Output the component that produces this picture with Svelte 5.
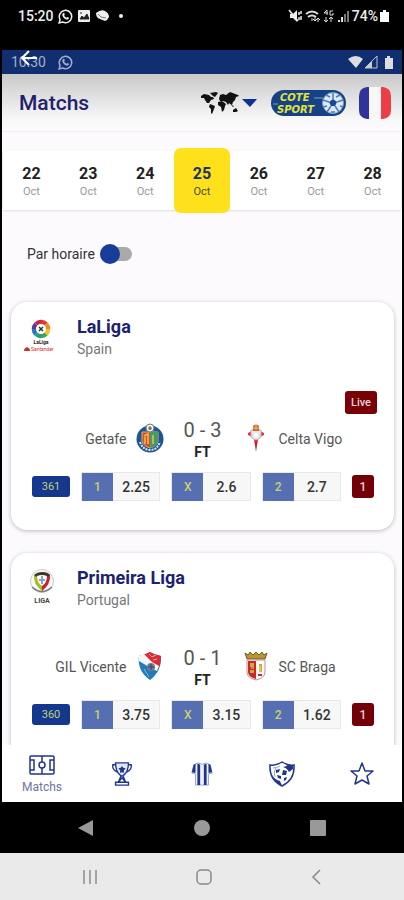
<script lang="ts">
	// Matches screen: date strip, league cards with odds, bottom navigation
	const days = [22, 23, 24, 25, 26, 27, 28];
	let selected = $state(25);
	let byTime = $state(false);

	const leagues = [
		{
			id: 'laliga',
			name: 'LaLiga',
			country: 'Spain',
			live: true,
			home: 'Getafe',
			away: 'Celta Vigo',
			score: '0 - 3',
			code: '361',
			odds: [['1', '2.25'], ['X', '2.6'], ['2', '2.7']]
		},
		{
			id: 'primeira',
			name: 'Primeira Liga',
			country: 'Portugal',
			live: false,
			home: 'GIL Vicente',
			away: 'SC Braga',
			score: '0 - 1',
			code: '360',
			odds: [['1', '3.75'], ['X', '3.15'], ['2', '1.62']]
		}
	];
</script>

{#snippet whatsapp()}
	<svg width="15" height="15" viewBox="0 0 16 16" aria-hidden="true">
		<path d="M1.2 14.8l1-3.6A6.6 6.6 0 1 1 4.8 13.8z" fill="none" stroke="currentColor" stroke-width="1.6" />
		<path d="M5.2 4.4l1.3-.3.8 2-.8.9c.5 1 1.3 1.8 2.4 2.3l.9-.9 1.9.9c0 1.3-.9 2-2 1.9C7 11 4.5 8 4.5 6z" fill="currentColor" />
	</svg>
{/snippet}

{#snippet leagueLogo(id: string)}
	{#if id === 'laliga'}
		<svg width="36" height="37" viewBox="0 0 36 37" aria-hidden="true">
			<g fill="none" stroke-width="4.5">
				<path d="M18 6A7 7 0 0 1 23 8" stroke="#e5352c" />
				<path d="M23 8A7 7 0 0 1 25 13" stroke="#f08a24" />
				<path d="M25 13A7 7 0 0 1 23 18" stroke="#f3c221" />
				<path d="M23 18A7 7 0 0 1 18 20" stroke="#45a348" />
				<path d="M18 20A7 7 0 0 1 13 18" stroke="#259c8b" />
				<path d="M13 18A7 7 0 0 1 11 13" stroke="#2677b9" />
				<path d="M11 13A7 7 0 0 1 13 8" stroke="#603b90" />
				<path d="M13 8A7 7 0 0 1 18 6" stroke="#c5264c" />
			</g>
			<circle cx="18" cy="13" r="5" fill="#fff" />
			<path d="M16 11l4 4M20 11l-4 4" stroke="#333" stroke-width="1.5" />
			<text x="18" y="28" text-anchor="middle" font-size="5" font-weight="700" fill="#222">LaLiga</text>
			<path d="M1 35q0-3 3-4q3 1 3 4z" fill="#d52b33" />
			<text x="8" y="35" font-size="5" fill="#d52b33">Santander</text>
		</svg>
	{:else}
		<svg width="36" height="38" viewBox="0 0 36 38" aria-hidden="true">
			<circle cx="19" cy="14" r="11.5" fill="#fafafa" stroke="#c9c9c9" />
			<path d="M9 20Q19 29 29 20" fill="none" stroke="#777" stroke-width="1.5" />
			<path d="M19 5Q13 5 11 8Q10 17 19 24z" fill="#a6bd24" />
			<path d="M19 5Q25 5 27 8Q28 17 19 24z" fill="#c4242b" />
			<path d="M11 8Q19 2 27 8L24 10H14z" fill="#34382e" />
			<path d="M14 9Q19 7 24 9Q24 16 19 19Q14 16 14 9z" fill="#fff" />
			<path d="M19 9v8M16 13h6" stroke="#86a6bd" stroke-width="2" />
			<text x="19" y="36" text-anchor="middle" font-size="7" font-weight="700" fill="#444">LIGA</text>
		</svg>
	{/if}
{/snippet}

{#snippet crest(team: string)}
	<svg width="30" height="30" viewBox="0 0 30 30" aria-hidden="true">
		{#if team === 'Getafe'}
			<circle cx="15" cy="16" r="13.5" fill="#1d5597" />
			<path d="M5 19Q8 27 15 27Q22 27 25 19" fill="none" stroke="#dce8f2" stroke-width="2" stroke-dasharray="2 1" />
			<path d="M7 9h16v9q-1 5-8 7q-7-2-8-7z" fill="#dd4b2d" stroke="#d6b35a" />
			<path d="M15 9h8v9q-1 5-8 7z" fill="#429b68" />
			<path d="M9 13l4-2v10M10 14v7M18 12v9" fill="none" stroke="#e8c34c" stroke-width="1.5" />
			<circle cx="15" cy="5" r="4" fill="#f4f4f4" stroke="#777" />
			<path d="M15 3l2 2-1 2h-2l-1-2z" fill="#777" />
		{:else if team === 'Celta Vigo'}
			<path d="M13 16h4l-2 13z" fill="#cf1f2e" />
			<path d="M7 10l4-2v6l-4-2zM23 10l-4-2v6l4-2z" fill="#d63a3f" />
			<path d="M10 7h10v5q0 4-5 5q-5-1-5-5z" fill="#dceaf0" stroke="#d9a8a4" />
			<path d="M12 3q3-3 6 0v5h-6z" fill="#dc5a37" />
			<path d="M12 5h6M15 1v6" stroke="#e9c45a" />
			<path d="M13 10h4v4h-4z" fill="#fff" />
		{:else if team === 'GIL Vicente'}
			<path d="M4 5l7-2 4-2 4 2 7 2q1 15-11 24Q2 20 4 5z" fill="#2379bd" />
			<path d="M8 4l7-3 4 2 7 2q0 7-3 13z" fill="#dc2b32" />
			<path d="M4 5l5-2 8 8 7 4-2 5-8-4-10-6z" fill="#f4f6f8" />
			<circle cx="16" cy="16" r="4" fill="#6f7b91" />
			<path d="M13 16h6M16 13v6" stroke="#37445e" />
			<path d="M9 18l5 8" stroke="#83bbe0" />
			<path d="M14 3l3 3 4-2M18 9l4-1" fill="none" stroke="#f3b4ae" />
		{:else}
			<path d="M4 2l3 2 2-3 3 3 3-3 3 3 3-3 2 3 3-2-2 6H6z" fill="#b6943c" stroke="#755c20" stroke-width="1" />
			<path d="M6 9h18v12q0 6-9 8q-9-2-9-8z" fill="#f8f8f8" stroke="#b59a92" />
			<path d="M7 10h8v18q-8-2-8-7z" fill="#c8272c" />
			<path d="M9 12h4v4H9zM9 19h4v3H9zM18 13h3v8h-3z" fill="#cfaa37" />
			<path d="M10 17h3M19 15v7" stroke="#f4df82" />
			<path d="M17 24h4" stroke="#c8272c" stroke-width="2" />
		{/if}
	</svg>
{/snippet}

<div class="phone">
	<div class="system-bar">
		<div class="group">
			<span class="clock">15:20</span>
			{@render whatsapp()}
			<svg width="14" height="14" viewBox="0 0 14 14" aria-hidden="true">
				<rect x="1" y="1" width="12" height="12" rx="1" fill="#eee" />
				<path d="M3 4h2M3 10l2-3 2 2 3-4 2 5z" fill="#222" stroke="#222" />
			</svg>
			<svg width="15" height="14" viewBox="0 0 15 14" aria-hidden="true">
				<path d="M1 4q5-4 9-2 4 2 4 6l-2 3-2 1-5-2Q1 9 1 4z" fill="#eee" />
				<path d="M3 5q2 4 8 4" fill="none" stroke="#777" />
			</svg>
			<span class="dot"></span>
		</div>
		<div class="group tight">
			<svg width="15" height="14" viewBox="0 0 15 14" aria-hidden="true">
				<path d="M2 5h3l4-4v12L5 9H2z" fill="#eee" />
				<path d="M1 1l9 11M11 3v3M11 8v3M13 2v3M13 7v4" stroke="#eee" stroke-width="1.5" />
			</svg>
			<svg width="16" height="14" viewBox="0 0 16 14" aria-hidden="true">
				<path d="M1 5q6-5 12 0M3 8q4-3 8 0" fill="none" stroke="#ddd" stroke-width="2" />
				<path d="M7 9v3M10 8v4M8 10l2 2 2-2M13 13V9M11 11l2-2 2 2" fill="none" stroke="#ddd" />
			</svg>
			<svg width="12" height="14" viewBox="0 0 12 14" aria-hidden="true">
				<path d="M4 1v5M4 1L1 4h4M10 2H7v4h3V4M3 8v5M1 11l2 2 2-2M8 13V8M6 10l2-2 2 2" fill="none" stroke="#ddd" />
			</svg>
			<svg width="13" height="14" viewBox="0 0 13 14" aria-hidden="true">
				<path d="M1 11h2v2H1zM4 8h2v5H4z" fill="#ddd" />
				<path d="M7 5h2v8H7zM10 2h2v11h-2z" fill="#777" />
			</svg>
			<span class="battery-level">74%</span>
			<svg width="9" height="14" viewBox="0 0 9 14" aria-hidden="true">
				<path d="M3 1h3v2h3v10H0V3h3z" fill="#fff" />
			</svg>
		</div>
	</div>

	<div class="app">
		<div class="app-status">
			<div class="group wide">
				<span>10:30</span>
				{@render whatsapp()}
			</div>
			<button class="back" aria-label="Retour">
				<svg width="18" height="16" viewBox="0 0 18 16" aria-hidden="true">
					<path d="M17 8H2M9 1L2 8l7 7" fill="none" stroke="#fff" stroke-width="2" />
				</svg>
			</button>
			<svg width="46" height="15" viewBox="0 0 46 15" aria-hidden="true">
				<path d="M0 4Q8-2 15 4L8 13z" fill="#ddd" />
				<path d="M17 13L29 1v12z" fill="none" stroke="#bcc3d3" stroke-width="1" />
				<path d="M17 13l7-7v7z" fill="#ccc" />
				<path d="M39 1h3v2h3v11h-8V3h2z" fill="#ddd" />
			</svg>
		</div>

		<header>
			<h1>Matchs</h1>
			<button class="region" aria-label="Pays">
				<svg width="40" height="24" viewBox="0 0 40 24" aria-hidden="true">
					<path d="M1 5l3-2 5 1 2 2 2 0 1 2-3 1-2 3-2 0-2-3-1-2-3 0z" fill="#111" />
					<path d="M10 2l6-1 2 1-3 4-2-1z" fill="#111" />
					<path d="M10 13l5 2-1 3-2 5-1-1 0-4-2-2z" fill="#111" />
					<path d="M19 8l1-4 3-1 3 1 4-3 8 3 1 1-3 1-1 3-2 2-1 3-2-1-1-1-1 2-2-3-3-1-3 0z" fill="#111" />
					<path d="M18 11l4-1 4 3-1 2-1 4-2 2-1-5-3-2z" fill="#111" />
					<path d="M33 19l3-2 2 3-2 1h-3zM31 14l3 1-1 1z" fill="#111" />
				</svg>
				<svg width="15" height="8" viewBox="0 0 15 8" aria-hidden="true">
					<path d="M0 0h15L8 8z" fill="#102f93" />
				</svg>
			</button>
			<svg class="brand" width="75" height="26" viewBox="0 0 75 26" role="img" aria-label="Cote Sport">
				<rect width="75" height="26" rx="13" fill="#164184" />
				<path d="M2 14h5M43 8h9" stroke="#74aac3" />
				<g class="brand-name" fill="#e3e33d">
					<text x="9" y="11">COTE</text>
					<text x="6" y="23">SPORT</text>
				</g>
				<circle cx="62" cy="13" r="10.5" fill="#dce8f4" stroke="#789fca" />
				<path d="M62 9l4 3-2 4h-4l-2-4z" fill="#1b459b" />
				<path d="M62 9V3M66 12l6-2M64 16l4 6M60 16l-4 6M58 12l-6-2M55 5l4 2M65 7l4-2M69 16l3 1M52 17l4-1M60 22h4" stroke="#4f79ba" stroke-width="1.5" />
			</svg>
			<button class="flag" aria-label="Français">
				<svg width="34" height="34" viewBox="0 0 34 34" aria-hidden="true">
					<path d="M11 1v32H9Q1 32 1 24V10Q1 2 9 1z" fill="#30339a" />
					<path d="M11 1h12v32H11z" fill="#f7f7f8" />
					<path d="M23 1h2q8 1 8 9v14q0 8-8 9h-2z" fill="#ed3d46" />
				</svg>
			</button>
		</header>

		<main>
			<div class="days">
				{#each days as day}
					<button class="day" class:active={day === selected} onclick={() => (selected = day)}>
						<strong>{day}</strong>
						<span>Oct</span>
					</button>
				{/each}
			</div>

			<label class="toggle">
				Par horaire
				<input type="checkbox" bind:checked={byTime} />
			</label>

			{#each leagues as league}
				<section class="card">
					<div class="league">
						<div class="logo">{@render leagueLogo(league.id)}</div>
						<div>
							<h2>{league.name}</h2>
							<p>{league.country}</p>
						</div>
					</div>
					{#if league.live}
						<div class="live-row"><span class="live">Live</span></div>
					{/if}
					<div class="match">
						<span class="team home">{league.home}</span>
						{@render crest(league.home)}
						<div class="result">
							<span class="score">{league.score}</span>
							<strong>FT</strong>
						</div>
						{@render crest(league.away)}
						<span class="team">{league.away}</span>
					</div>
					<div class="odds">
						<span class="code">{league.code}</span>
						{#each league.odds as [label, value]}
							<button class="odd">
								<span class="pick">{label}</span>
								<span class="value">{value}</span>
							</button>
						{/each}
						<button class="more">1</button>
					</div>
				</section>
			{/each}
		</main>

		<nav class="tabs">
			<a class="current" href="#matchs">
				<svg width="26" height="22" viewBox="0 0 26 22" aria-hidden="true">
					<g fill="none" stroke="currentColor" stroke-width="1.5">
						<rect x="1" y="2" width="24" height="18" rx="1" />
						<path d="M13 2v6M13 14v6M1 6h4v10H1M25 6h-4v10h4" />
						<circle cx="13" cy="11" r="3" />
					</g>
				</svg>
				<span>Matchs</span>
			</a>
			<a href="#competitions" aria-label="Compétitions">
				<svg width="24" height="26" viewBox="0 0 26 28" aria-hidden="true">
					<g fill="none" stroke="currentColor" stroke-width="1.5">
						<path d="M6 2h14q0 10-6 14h-2Q6 12 6 2z" fill="#e2e9f7" />
						<path d="M6 4H3Q2 9 8 12M20 4h3q1 5-5 8" />
						<path d="M12 16l-3 7M14 16l3 7M10 22l3-4 3 4M6 23h14v3H6z" />
					</g>
					<path d="M13 5l1 2 3 1-2 2v3l-2-1-2 1v-3L9 8l3-1z" fill="currentColor" />
				</svg>
			</a>
			<a href="#equipes" aria-label="Équipes">
				<svg width="24" height="26" viewBox="0 0 26 28" aria-hidden="true">
					<path d="M9 2L4 4 2 13l4 1V26h14V14l4-1-2-9-5-2q-4 3-8 0z" fill="#f0f3fb" stroke="#8ca0cc" stroke-width="1" />
					<path d="M4 4l2-1v10l-4-1zM22 4l-2-1v10l4-1zM9 3l2 1v22H8V3zM15 4l2-1 1 1v22h-3z" fill="currentColor" />
				</svg>
			</a>
			<a href="#clubs" aria-label="Clubs">
				<svg width="28" height="28" viewBox="0 0 28 28" aria-hidden="true">
					<path d="M2 5q6 1 12-3 6 4 12 3 1 15-12 21Q1 20 2 5z" fill="#fff" stroke="currentColor" stroke-width="1.5" />
					<path d="M5 8q4 0 7-2M7 17q-2-5 1-9" fill="none" stroke="#8fa3d3" />
					<path d="M15 10l4 1-1 4-4 0zM8 10l4-1-1 3-3 1zM9 15l4 1 0 3-3-1zM16 18l3-1-1 3-2 1z" fill="currentColor" />
					<path d="M15 7q4 1 6 5l4-3V5q-4 1-7-1l1 2zM4 15q3 5 8 6l2 5Q7 23 4 15z" fill="currentColor" />
				</svg>
			</a>
			<a href="#favoris" aria-label="Favoris">
				<svg width="26" height="26" viewBox="0 0 26 26" aria-hidden="true">
					<path d="M13 2l3 8h8l-6 5 2 8-7-4-7 4 2-8-6-5h8z" fill="#fff" stroke="currentColor" stroke-width="1.5" stroke-linejoin="round" />
				</svg>
			</a>
		</nav>
	</div>

	<div class="keys dark">
		<button aria-label="Retour"><svg width="16" height="18" viewBox="0 0 16 18"><path d="M15 1v16L0 9z" fill="#999" /></svg></button>
		<button aria-label="Accueil"><svg width="16" height="16" viewBox="0 0 16 16"><circle cx="8" cy="8" r="8" fill="#999" /></svg></button>
		<button aria-label="Récents"><svg width="16" height="16" viewBox="0 0 16 16"><rect width="16" height="16" rx="1" fill="#999" /></svg></button>
	</div>
	<div class="keys light">
		<button aria-label="Récents"><svg width="16" height="16" viewBox="0 0 16 16"><path d="M2 1v14M8 1v14M14 1v14" stroke="#8c8c8c" stroke-width="1.5" /></svg></button>
		<button aria-label="Accueil"><svg width="18" height="18" viewBox="0 0 18 18"><rect x="2" y="2" width="14" height="14" rx="4" fill="none" stroke="#888" stroke-width="1.5" /></svg></button>
		<button aria-label="Retour"><svg width="16" height="16" viewBox="0 0 16 16"><path d="M11 1L4 8l7 7" fill="none" stroke="#888" stroke-width="1.5" /></svg></button>
	</div>
</div>

<style>
	:global(body) {
		margin: 0;
	}

	.phone {
		display: flex;
		flex-direction: column;
		height: 100vh;
		background: #000;
		font-family: Roboto, sans-serif;
		color: #333;
	}

	.phone * {
		box-sizing: border-box;
	}

	button {
		padding: 0;
		border: 0;
		background: none;
		font-family: inherit;
		color: inherit;
	}

	svg {
		display: block;
		flex-shrink: 0;
	}

	h1,
	h2,
	p {
		margin: 0;
	}

	/* Status bars */
	.system-bar {
		display: flex;
		justify-content: space-between;
		height: 50px;
		padding: 6px 15px 24px 18px;
		color: #eee;
		font-size: 14px;
		font-weight: 500;
	}

	.group {
		display: flex;
		align-items: center;
		gap: 4px;
	}

	.group.tight {
		gap: 2px;
	}

	.group.wide {
		gap: 12px;
	}

	.dot {
		width: 4px;
		height: 4px;
		margin-left: 5px;
		border-radius: 50%;
		background: #eee;
	}

	.app {
		display: flex;
		flex: 1;
		flex-direction: column;
		min-height: 0;
		margin: 0 2px;
		background: #fcfafd;
	}

	.app-status {
		position: relative;
		display: flex;
		align-items: center;
		justify-content: space-between;
		height: 24px;
		padding: 0 8px 0 9px;
		background: #112f70;
		color: #a3afca;
		font-size: 14px;
		flex-shrink: 0;
	}

	/* The arrow floats over the clock */
	.back {
		position: absolute;
		top: 0;
		left: 18px;
	}

	header {
		display: flex;
		align-items: center;
		height: 58px;
		padding: 0 10px 0 17px;
		background: linear-gradient(#c9c9c9, #f8f8f8 80%, #fcfafd);
		border-bottom: 1px solid #eee;
		flex-shrink: 0;
	}

	h1 {
		flex: 1;
		color: #22216d;
		font-size: 21px;
		font-weight: 500;
	}

	.region {
		display: flex;
		align-items: center;
		gap: 2px;
	}

	.brand {
		margin: 0 12px 0 14px;
	}

	.brand-name {
		font: italic 700 10px 'DejaVu Sans', sans-serif;
	}

	/* Scrolling content */
	main {
		flex: 1;
		min-height: 0;
		overflow-y: auto;
		scrollbar-width: none;
	}

	.days {
		display: flex;
		align-items: center;
		height: 59px;
		margin: 19px 1px 0;
		background: #fff;
		box-shadow: 0 1px 2px #ddd;
	}

	.day {
		display: flex;
		flex: 1;
		flex-direction: column;
		align-items: center;
		justify-content: center;
		height: 65px;
		padding-top: 2px;
		border-radius: 7px;
		color: #222;
	}

	.day strong {
		font-size: 16px;
		font-weight: 700;
		line-height: 20px;
	}

	.day span {
		color: #999;
		font-size: 11px;
		line-height: 16px;
	}

	.day.active {
		background: #fee11b;
		color: #203363;
	}

	.day.active span {
		color: #4a4b43;
	}

	.toggle {
		display: flex;
		align-items: center;
		gap: 5px;
		width: fit-content;
		height: 20px;
		margin: 34px 0 38px 25px;
		font-size: 14px;
	}

	.toggle input {
		display: flex;
		align-items: center;
		width: 32px;
		height: 14px;
		margin: 0;
		appearance: none;
		background: #aaa;
		border-radius: 7px;
	}

	.toggle input::before {
		content: '';
		width: 20px;
		height: 20px;
		border-radius: 50%;
		background: #173d98;
		flex-shrink: 0;
	}

	.toggle input:checked {
		justify-content: flex-end;
	}

	.card {
		margin: 0 8px 23px 9px;
		padding-bottom: 29px;
		border-radius: 16px;
		background: #fff;
		box-shadow: 0 1px 4px #bbb;
	}

	.league {
		display: flex;
		height: 89px;
		padding: 14px 12px 0;
		gap: 18px;
	}

	.logo {
		width: 36px;
	}

	h2 {
		color: #1b2270;
		font-size: 18px;
		font-weight: 700;
		line-height: 22px;
	}

	p {
		color: #777;
		font-size: 14px;
		line-height: 22px;
	}

	.live-row {
		display: flex;
		justify-content: flex-end;
		padding-right: 17px;
	}

	.live {
		width: 32px;
		border-radius: 3px;
		background: #780006;
		color: #ead5d5;
		font-size: 11px;
		font-weight: 500;
		line-height: 23px;
		text-align: center;
	}

	.match {
		display: grid;
		grid-template-columns: 1fr 30px 60px 30px 1fr;
		column-gap: 8px;
		align-items: start;
		padding-top: 5px;
	}

	.match > svg {
		margin-top: 4px;
	}

	.team {
		color: #555;
		font-size: 14px;
		line-height: 40px;
	}

	.home {
		text-align: right;
	}

	.result {
		display: flex;
		flex-direction: column;
		align-items: center;
	}

	.score {
		color: #555;
		font-size: 20px;
		line-height: 22px;
	}

	.result strong {
		color: #222;
		font-size: 14px;
		line-height: 22px;
	}

	.odds {
		display: grid;
		grid-template-columns: 38px 1fr 1fr 1fr 22px;
		gap: 11px;
		align-items: center;
		margin-top: 9px;
		padding: 0 20px 0 21px;
	}

	.code {
		border-radius: 3px;
		background: #14388e;
		color: #c3cf76;
		font-size: 11px;
		line-height: 21px;
		text-align: center;
	}

	.odd {
		display: grid;
		grid-template-columns: 2fr 3fr;
		height: 29px;
		border: 1px solid #e8e8e8;
		background: #f7f7f7;
		font-size: 14px;
		font-weight: 500;
		line-height: 28px;
	}

	.pick {
		background: #566fb2;
		color: #cbd16b;
		font-size: 12px;
	}

	.more {
		height: 23px;
		border-radius: 3px;
		background: #720006;
		color: #ead5d5;
		font-size: 12px;
		font-weight: 500;
	}

	/* Bottom navigation */
	.tabs {
		display: flex;
		height: 57px;
		background: #fff;
		flex-shrink: 0;
	}

	.tabs a {
		display: flex;
		flex: 1;
		flex-direction: column;
		align-items: center;
		justify-content: center;
		color: #20358c;
		text-decoration: none;
	}

	.tabs .current {
		justify-content: flex-end;
		padding-bottom: 4px;
	}

	.tabs span {
		color: #6f74a0;
		font-size: 12px;
		line-height: 22px;
	}

	.keys {
		display: flex;
		align-items: center;
		justify-content: space-between;
		padding: 0 78px;
		flex-shrink: 0;
	}

	.keys.dark {
		height: 51px;
	}

	.keys.light {
		height: 47px;
		padding: 0 79px 0 82px;
		background: #eaeaea;
	}
</style>
